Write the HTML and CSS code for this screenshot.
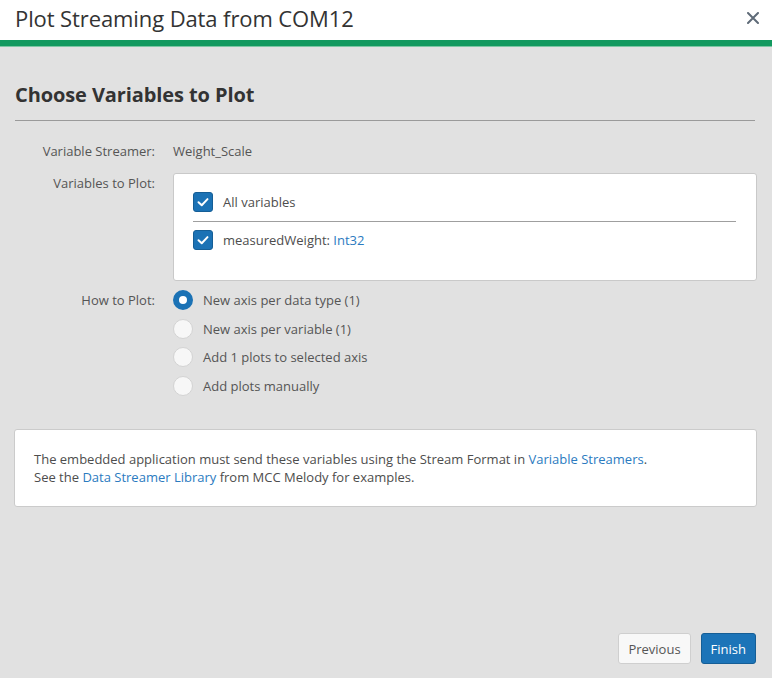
FILE: index.html
```html
<!DOCTYPE html>
<html>
<head>
<meta charset="utf-8">
<link rel="stylesheet" href="styles.css">
</head>
<body>
<div class="dialog">
  <header class="titlebar">
    <h1 class="title">Plot Streaming Data from COM12</h1>
    <svg class="close" viewBox="0 0 12 12" width="12" height="12"><path d="M1 1 L11 11 M11 1 L1 11" stroke="#5f6b78" stroke-width="2" stroke-linecap="round"/></svg>
  </header>
  <div class="accent"></div>
  <main class="content">
    <h2 class="section-title">Choose Variables to Plot</h2>
    <div class="rule"></div>
    <div class="form">
      <div class="label lbl-streamer">Variable Streamer:</div>
      <div class="value val-streamer">Weight_Scale</div>

      <div class="label lbl-vars">Variables to Plot:</div>
      <div class="varbox">
        <div class="check-row">
          <span class="checkbox"><svg viewBox="0 0 20 20" width="20" height="20"><path d="M5 10.2 L8.6 13.6 L15 6.8" fill="none" stroke="#fff" stroke-width="2.2" stroke-linecap="round" stroke-linejoin="round"/></svg></span>
          <span class="check-text">All variables</span>
        </div>
        <div class="inner-rule"></div>
        <div class="check-row">
          <span class="checkbox"><svg viewBox="0 0 20 20" width="20" height="20"><path d="M5 10.2 L8.6 13.6 L15 6.8" fill="none" stroke="#fff" stroke-width="2.2" stroke-linecap="round" stroke-linejoin="round"/></svg></span>
          <span class="check-text">measuredWeight: <span class="link">Int32</span></span>
        </div>
      </div>

      <div class="label lbl-how">How to Plot:</div>
      <div class="radios">
        <div class="radio-row"><span class="radio checked"></span><span class="radio-text">New axis per data type (1)</span></div>
        <div class="radio-row"><span class="radio"></span><span class="radio-text">New axis per variable (1)</span></div>
        <div class="radio-row"><span class="radio"></span><span class="radio-text">Add 1 plots to selected axis</span></div>
        <div class="radio-row"><span class="radio"></span><span class="radio-text">Add plots manually</span></div>
      </div>
    </div>

    <div class="info">
      <p>The embedded application must send these variables using the Stream Format in <span class="link">Variable Streamers</span>.</p>
      <p>See the <span class="link">Data Streamer Library</span> from MCC Melody for examples.</p>
    </div>

    <div class="spacer"></div>
    <div class="buttons">
      <button class="btn btn-secondary">Previous</button>
      <button class="btn btn-primary">Finish</button>
    </div>
  </main>
</div>
</body>
</html>
```
FILE: styles.css
```css
* { box-sizing: border-box; }
html, body { margin: 0; padding: 0; }
body {
  width: 772px;
  height: 678px;
  font-family: "Open Sans", "Noto Sans", sans-serif;
  background: #e1e1e1;
  color: #4a4a4a;
  overflow: hidden;
}
.dialog {
  display: flex;
  flex-direction: column;
  height: 678px;
}
.titlebar {
  height: 40px;
  background: #ffffff;
  display: flex;
  align-items: center;
  justify-content: space-between;
  padding: 0 13px 0 15px;
}
.title {
  margin: 0;
  font-size: 22px;
  font-weight: 400;
  color: #333;
  letter-spacing: -0.1px;
  position: relative;
  top: -2px;
}
.close {
  display: block;
  position: relative;
  top: -2px;
}
.accent {
  height: 7px;
  background: #12995f;
  border-bottom: 1px solid #7cc6a4;
}
.content {
  flex: 1;
  display: flex;
  flex-direction: column;
  padding: 0 15px 14px 14px;
}
.section-title {
  margin: 36px 0 0 1px;
  font-size: 20px;
  font-weight: 700;
  color: #333;
  line-height: 24px;
  letter-spacing: -0.1px;
}
.rule {
  margin: 13px 2px 0 1px;
  height: 1px;
  background: #9a9a9a;
}
.form {
  display: grid;
  grid-template-columns: 141px 1fr;
  column-gap: 18px;
  margin-top: 21px;
  font-size: 13px;
}
.label {
  text-align: right;
  color: #555;
  line-height: 18px;
}
.value { color: #555; line-height: 18px; }
.lbl-vars { margin-top: 14px; }
.varbox {
  margin-top: 13px;
  background: #fff;
  border: 1px solid #c9c9c9;
  border-radius: 3px;
  padding: 18px 20px 29px 19px;
  height: 108px;
}
.check-row {
  display: flex;
  align-items: center;
  gap: 10px;
  height: 20px;
}
.checkbox {
  width: 20px;
  height: 20px;
  border-radius: 3px;
  background: #1b72b5;
  border: 1px solid #155e96;
  display: flex;
  align-items: center;
  justify-content: center;
}
.checkbox svg { display: block; }
.check-text { color: #4d4d4d; }
.inner-rule {
  height: 1px;
  background: #9f9f9f;
  margin: 9px 0 8px 0;
}
.link { color: #2b7bbf; }
.lbl-how { margin-top: 10px; }
.radios {
  margin-top: 9px;
  display: flex;
  flex-direction: column;
  gap: 8.7px;
}
.radio-row {
  display: flex;
  align-items: center;
  gap: 10px;
  height: 20px;
}
.radio {
  width: 20px;
  height: 20px;
  border-radius: 50%;
  background: #f7f7f7;
  border: 1px solid #d3d3d3;
}
.radio.checked {
  background: #fff;
  border: 6px solid #1b72b5;
}
.radio-text { color: #555; }
.info {
  margin-top: 33px;
  background: #fff;
  border: 1px solid #cbcbcb;
  border-radius: 3px;
  padding: 20px 19px 22px 19px;
  font-size: 13px;
  color: #4d4d4d;
  line-height: 18px;
  height: 78px;
}
.info p { margin: 0; }
.spacer { flex: 1; }
.buttons {
  display: flex;
  justify-content: flex-end;
  gap: 10px;
  margin-right: 1px;
}
.btn {
  font-family: inherit;
  font-size: 13px;
  height: 31px;
  border-radius: 3px;
  padding: 0 9px;
  cursor: pointer;
}
.btn-secondary {
  background: #f8f8f8;
  border: 1px solid #cfcfcf;
  color: #555;
}
.btn-primary {
  background: #1c74b8;
  border: 1px solid #155e96;
  color: #fff;
}
```
